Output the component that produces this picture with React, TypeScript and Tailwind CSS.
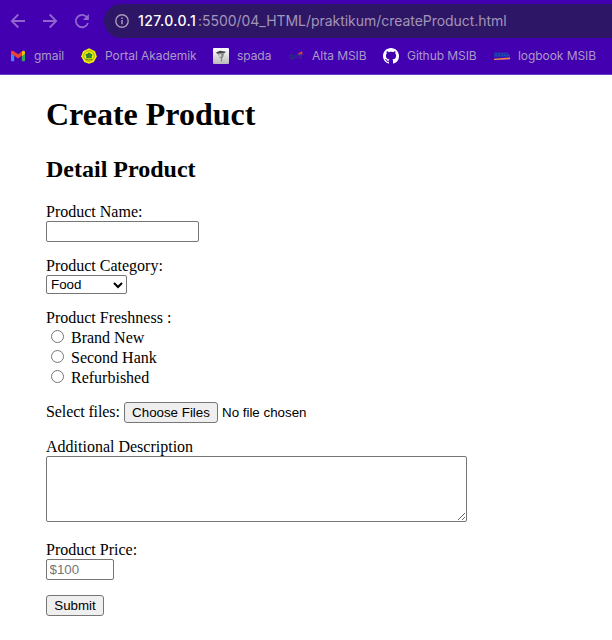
import type { ReactNode } from "react";

const control = "block rounded-[2px] border border-[#767676] bg-white";
const button =
  "h-[21px] rounded-[3px] border border-[#767676] bg-[#efefef] text-center font-['Liberation_Sans',Arial,sans-serif] text-[13.33px] leading-[19px] whitespace-nowrap";

function GmailIcon() {
  return (
    <svg width="14" height="12" viewBox="0 0 14 12" className="block">
      <path d="M0 2.2h3.2v9H.8c-.4 0-.8-.3-.8-.8z" fill="#4285f4" />
      <path d="M10.8 2.2H14v8.200c0 .5-.4.8-.8.8h-2.400z" fill="#34a853" />
      <path d="M10.8 1.400C12 .2 14 .6 14 2.200v1.500l-3.200 2.500z" fill="#fbbc04" />
      <path d="M0 2.200C0 .6 2 .2 3.200 1.400L7 4.300l3.800-2.900v4L7 8.400 3.200 5.400 0 3.700z" fill="#ea4335" />
    </svg>
  );
}

function CampusIcon() {
  return (
    <svg width="16" height="16" viewBox="0 0 16 16" className="block">
      <path d="M8 .3 14 3.300 15.800 8.500 12.800 14 8 15.700 3.200 14 .2 8.500 2 3.300z" fill="#f4f000" />
      <circle cx="8" cy="8" r="5.300" fill="none" stroke="#9d9a22" strokeWidth=".9" />
      <path d="m8 4.300 1.300 1.300 2.400.8-1 1.800.2 2H5.100l.2-2-1-1.800 2.400-.8z" fill="#168b3c" />
      <path d="M7.300 6.800h1.400V9H7.300z" fill="#a05a18" />
      <path d="M4.500 11.300q3.500 1.300 7 0" stroke="#77851d" fill="none" />
    </svg>
  );
}

function SpadaIcon() {
  return (
    <svg width="16" height="16" viewBox="0 0 16 16" className="block">
      <defs>
        <linearGradient id="paper" x2="0" y2="1">
          <stop stopColor="#fff" />
          <stop offset="1" stopColor="#bbb" />
        </linearGradient>
      </defs>
      <rect width="16" height="16" rx="1" fill="url(#paper)" />
      <path d="m3 4.500 4-1.800 6 1.100-2 1.700-3-.5-3.500 1z" fill="#444" />
      <path d="M5 5.500 8 5l3 .8-.8 3.200-1.200 1.500.2 3.300-1.100-.3-.3-3.200-1.800-1.400z" fill="#888" />
      <path d="M6.200 6.300h2v2.500h-2z" fill="#ddd" />
    </svg>
  );
}

function AltaIcon() {
  return (
    <svg width="16" height="16" viewBox="0 0 16 16" className="block">
      <g fill="none" stroke="#2c3475" strokeWidth="1">
        <circle cx="3" cy="8.500" r="1.700" />
        <path d="M4.700 6.500V11q0 1-1 1M7 11V7.500q1.800-1.500 2.300.5v2.500M14 10.500h-2q-1.200-2 .2-3.200H14M11.500 8.800H14" />
      </g>
      <path d="M9.500 5.800 14.300 3.200V7.300l-1.600-1.200z" fill="#ed4523" />
      <path d="m9.500 6.500 3-.8-1 2z" fill="#08718a" />
    </svg>
  );
}

function GithubIcon() {
  return (
    <svg width="16" height="16" viewBox="0 0 16 16" className="block" fill="#fff">
      <path d="M8 0C3.580 0 0 3.580 0 8c0 3.540 2.290 6.530 5.470 7.590.4.070.550-.170.550-.380 0-.190-.010-.820-.010-1.490-2.010.370-2.530-.490-2.690-.940-.090-.230-.480-.940-.820-1.130-.280-.150-.680-.520-.010-.530.630-.010 1.080.580 1.230.820.720 1.210 1.870.870 2.330.660.070-.520.280-.870.510-1.070-1.780-.2-3.640-.890-3.640-3.950 0-.870.310-1.590.820-2.150-.080-.2-.360-1.020.080-2.120 0 0 .670-.210 2.200.820.640-.180 1.320-.270 2-.270s1.360.090 2 .270c1.530-1.040 2.200-.820 2.200-.820.440 1.100.160 1.920.080 2.120.510.560.820 1.270.820 2.150 0 3.070-1.870 3.750-3.650 3.950.290.250.540.730.540 1.480 0 1.070-.010 1.930-.010 2.200 0 .210.150.460.550.380A8.010 8.010 0 0 0 16 8c0-4.420-3.580-8-8-8z" />
    </svg>
  );
}

function LogbookIcon() {
  return (
    <svg width="16" height="16" viewBox="0 0 16 16" className="block">
      <path d="M0 4.500h14v1.500h2v3L0 9.500z" fill="#2330ae" />
      <path d="M1 5.500h13M1 7.500h14" stroke="#1c4da8" strokeDasharray="2 1" />
      <path d="M0 10.800 16 9.500v1.700L0 12z" fill="#ff8a50" />
    </svg>
  );
}

function Bookmark({ icon, label, className }: { icon: ReactNode; label: string; className: string }) {
  return (
    <div className={`flex shrink-0 items-center whitespace-nowrap ${className}`}>
      {icon}
      <span>{label}</span>
    </div>
  );
}

function BrowserBar() {
  return (
    <header className="h-[75px] overflow-hidden border-b border-[#6e3dc7] bg-[#4300b1] font-[Inter,sans-serif]">
      <div className="flex h-[42px] items-center">
        <svg width="104" height="42" viewBox="0 0 104 42" className="block shrink-0" fill="none" stroke="#9066ce" strokeWidth="1.800">
          <path d="M25 21H12M18.300 14.500 11.800 21l6.500 6.500M43 21h13M49.700 14.500l6.500 6.500-6.500 6.500" />
          <path d="M87.200 17.500a6.200 6.200 0 1 0 .8 5.400" />
          <path d="M88.900 14v6h-6z" fill="#9066ce" stroke="none" />
        </svg>
        <div className="flex h-[34px] flex-1 items-center rounded-l-full bg-[#2e1666] pl-[11px]">
          <svg width="14" height="14" viewBox="0 0 14 14" className="block" fill="none" stroke="#a79cb9">
            <circle cx="7" cy="7" r="6.200" strokeWidth="1.400" />
            <path d="M7 6v4.300M7 3.600V5" strokeWidth="1.500" />
          </svg>
          <div className="ml-[9px] flex text-[14px] leading-[22px] whitespace-nowrap">
            <span className="w-[60px] font-medium tracking-[0.4px] text-white">127.0.0.1</span>
            <span className="tracking-[-0.04px] text-[#a195b8]">:5500/04_HTML/praktikum/createProduct.html</span>
          </div>
        </div>
      </div>
      <nav className="flex h-[28px] items-center pl-[11px] text-[12px] leading-[18px] tracking-[-0.06px] text-[#a99bc5]">
        <Bookmark icon={<GmailIcon />} label="gmail" className="w-[70px] gap-[9px]" />
        <Bookmark icon={<CampusIcon />} label="Portal Akademik" className="w-[132px] gap-[8px]" />
        <Bookmark icon={<SpadaIcon />} label="spada" className="w-[75px] gap-[8px]" />
        <Bookmark icon={<AltaIcon />} label="Alta MSIB" className="w-[95px] gap-[8px]" />
        <Bookmark icon={<GithubIcon />} label="Github MSIB" className="w-[111px] gap-[8px]" />
        <Bookmark icon={<LogbookIcon />} label="logbook MSIB" className="gap-[8px]" />
      </nav>
    </header>
  );
}

export default function App() {
  return (
    <div className="h-[640px] w-[612px] overflow-hidden bg-white font-['Liberation_Serif','Times_New_Roman',serif] text-[16px] leading-[18px] text-black">
      <BrowserBar />
      <main className="pl-[46px]">
        <h1 className="mt-[21px] text-[32px] leading-[37px] font-bold">Create Product</h1>
        <h2 className="mt-[22px] text-[24px] leading-[28px] font-bold">Detail Product</h2>
        <form onSubmit={(e) => e.preventDefault()}>
          <div className="mt-[20px]">
            <label htmlFor="name" className="block">Product Name:</label>
            <input id="name" className={`${control} h-[21px] w-[153px]`} />
          </div>
          <div className="mt-[15px]">
            <label className="block">Product Category:</label>
            <button type="button" className={`${control} flex h-[19px] w-[81px] items-center justify-between pr-[3px] pl-[4px] font-['Liberation_Sans',Arial,sans-serif] text-[13.33px] leading-[17px]`}>
              <span>Food</span>
              <svg width="10" height="8" viewBox="0 0 10 8" fill="none" stroke="#000" strokeWidth="2">
                <path d="m1 2 4 4 4-4" />
              </svg>
            </button>
          </div>
          <fieldset className="mt-[15px]">
            <legend className="block h-[18px]">Product Freshness :</legend>
            {["Brand New", "Second Hank", "Refurbished"].map((option) => (
              <label key={option} className="flex h-[20px] items-start pl-[5px]">
                <input type="radio" name="freshness" className="mt-[3px] h-[13px] w-[13px]" />
                <span className="ml-[7px] pt-[2px]">{option}</span>
              </label>
            ))}
          </fieldset>
          <div className="mt-[15px] flex h-[21px]">
            <span className="w-[78px] pt-px tracking-[-0.1px]">Select files:</span>
            <button type="button" className={`${button} w-[94px]`}>Choose Files</button>
            <span className="ml-[4px] font-['Liberation_Sans',Arial,sans-serif] text-[13.33px] leading-[21px]">No file chosen</span>
          </div>
          <div className="mt-[15px]">
            <label htmlFor="description" className="block">Additional Description</label>
            <textarea id="description" className={`${control} h-[66px] w-[421px] resize`} />
          </div>
          <div className="mt-[19px]">
            <label htmlFor="price" className="block">Product Price:</label>
            <input id="price" placeholder="$100" className={`${control} h-[21px] w-[68px] px-[2.5px] font-['Liberation_Sans',Arial,sans-serif] text-[13.33px] leading-[17px] placeholder:text-[#757575]`} />
          </div>
          <button type="submit" className={`${button} mt-[15px] block w-[58px]`}>Submit</button>
        </form>
      </main>
    </div>
  );
}
